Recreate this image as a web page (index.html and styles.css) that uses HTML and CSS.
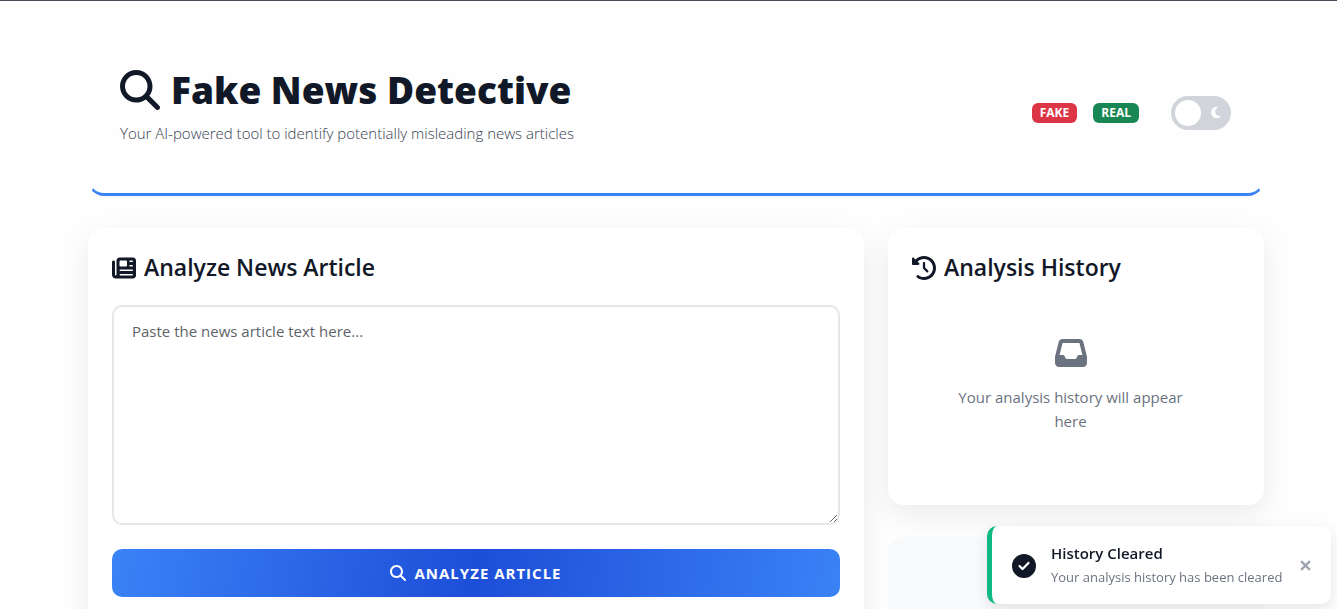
FILE: index.html
```html
<!DOCTYPE html>
<html lang="en">
<head>
<meta charset="utf-8">
<meta name="viewport" content="width=device-width, initial-scale=1">
<title>Fake News Detective</title>
<link rel="stylesheet" href="styles.css">
</head>
<body>
<svg class="sprite" aria-hidden="true">
  <symbol id="search" viewBox="0 0 512 512"><path d="M416 208c0 45.900-14.900 88.300-40 122.700L502.600 457.400c12.500 12.500 12.500 32.800 0 45.300s-32.800 12.500-45.300 0L330.700 376c-34.400 25.200-76.800 40-122.700 40C93.100 416 0 322.900 0 208S93.100 0 208 0S416 93.100 416 208zM208 352a144 144 0 1 0 0-288 144 144 0 1 0 0 288z"/></symbol>
  <symbol id="news" viewBox="0 0 512 512"><path d="M96 96c0-35.300 28.700-64 64-64H448c35.300 0 64 28.700 64 64V416c0 35.300-28.700 64-64 64H80c-44.200 0-80-35.800-80-80V128c0-17.700 14.300-32 32-32s32 14.300 32 32V400c0 8.800 7.200 16 16 16s16-7.200 16-16V96zm64 24v80c0 13.300 10.700 24 24 24H296c13.300 0 24-10.700 24-24V120c0-13.300-10.700-24-24-24H184c-13.300 0-24 10.700-24 24zm208-8c0 8.800 7.200 16 16 16h48c8.800 0 16-7.200 16-16s-7.200-16-16-16H384c-8.800 0-16 7.200-16 16zm0 96c0 8.800 7.200 16 16 16h48c8.800 0 16-7.200 16-16s-7.200-16-16-16H384c-8.800 0-16 7.200-16 16zM160 304c0 8.800 7.200 16 16 16H432c8.800 0 16-7.200 16-16s-7.200-16-16-16H176c-8.800 0-16 7.200-16 16zm0 96c0 8.800 7.200 16 16 16H432c8.800 0 16-7.200 16-16s-7.200-16-16-16H176c-8.800 0-16 7.200-16 16z"/></symbol>
  <symbol id="history" viewBox="0 0 512 512"><path d="M75 75L41 41C25.900 25.900 0 36.600 0 57.900V168c0 13.300 10.700 24 24 24H134.100c21.400 0 32.100-25.900 17-41l-30.800-30.800C155 85.500 203 64 256 64c106 0 192 86 192 192s-86 192-192 192c-40.800 0-78.600-12.700-109.700-34.400c-14.500-10.100-34.400-6.600-44.600 7.900s-6.600 34.400 7.900 44.600C151.200 495 201.700 512 256 512c141.400 0 256-114.600 256-256S397.400 0 256 0C185.300 0 121.300 28.700 75 75zm181 53c-13.300 0-24 10.700-24 24V256c0 6.400 2.500 12.500 7 17l72 72c9.400 9.400 24.600 9.400 33.900 0s9.400-24.600 0-33.900l-65-65V152c0-13.300-10.700-24-24-24z"/></symbol>
  <symbol id="inbox" viewBox="0 0 512 512"><path d="M121 32C91.600 32 66 52 58.900 80.500L1.900 308.400C.6 313.500 0 318.700 0 323.900V416c0 35.300 28.700 64 64 64H448c35.300 0 64-28.700 64-64V323.900c0-5.200-.6-10.400-1.900-15.500l-57-227.900C446 52 420.400 32 391 32H121zm0 64H391l48 192H387.800c-12.100 0-23.200 6.800-28.600 17.700l-14.300 28.600c-5.400 10.800-16.500 17.700-28.600 17.700H195.800c-12.100 0-23.200-6.800-28.600-17.700l-14.300-28.600c-5.400-10.800-16.500-17.700-28.600-17.700H73L121 96z"/></symbol>
  <symbol id="check" viewBox="0 0 512 512"><path d="M256 512A256 256 0 1 0 256 0a256 256 0 1 0 0 512zM369 209L241 337c-9.400 9.400-24.600 9.400-33.900 0l-64-64c-9.400-9.400-9.400-24.600 0-33.900s24.600-9.400 33.900 0l47 47L335 175c9.400-9.400 24.600-9.400 33.900 0s9.400 24.600 0 33.900z"/></symbol>
  <symbol id="moon" viewBox="0 0 384 512"><path d="M223.500 32C100 32 0 132.300 0 256S100 480 223.500 480c60.600 0 115.500-24.200 155.800-63.400c5-4.900 6.300-12.500 3.100-18.700s-10.100-9.700-17-8.500c-9.800 1.700-19.800 2.600-30.100 2.600c-96.900 0-175.500-78.800-175.500-176c0-65.800 36-123.100 89.300-153.300c6.100-3.500 9.200-10.500 7.700-17.300s-7.300-11.900-14.300-12.500c-6.300-.5-12.600-.8-19-.8z"/></symbol>
</svg>

<div class="container">
  <header class="header">
    <div>
      <h1 class="title"><svg class="title-icon" aria-hidden="true"><use href="#search"/></svg>Fake News Detective</h1>
      <p class="tagline">Your AI-powered tool to identify potentially misleading news articles</p>
    </div>
    <div class="tools">
      <span class="badge badge-fake">FAKE</span>
      <span class="badge badge-real">REAL</span>
      <label class="switch">
        <input class="switch-input" type="checkbox" role="switch" aria-label="Dark mode">
        <svg class="switch-moon" aria-hidden="true"><use href="#moon"/></svg>
      </label>
    </div>
  </header>

  <main class="grid">
    <section class="card">
      <h2 class="card-title"><svg class="card-icon" aria-hidden="true"><use href="#news"/></svg>Analyze News Article</h2>
      <textarea class="article" aria-label="News article text" placeholder="Paste the news article text here..."></textarea>
      <button class="analyze" type="button"><svg class="analyze-icon" aria-hidden="true"><use href="#search"/></svg>ANALYZE ARTICLE</button>
    </section>
    <div class="side">
      <section class="card history">
        <h2 class="card-title"><svg class="card-icon" aria-hidden="true"><use href="#history"/></svg>Analysis History</h2>
        <div class="empty">
          <svg class="empty-icon" aria-hidden="true"><use href="#inbox"/></svg>
          <p class="empty-text">Your analysis history will appear here</p>
        </div>
      </section>
      <section class="panel"></section>
    </div>
  </main>
</div>

<div class="toast" role="status">
  <svg class="toast-icon" aria-hidden="true"><use href="#check"/></svg>
  <div class="toast-body">
    <p class="toast-title">History Cleared</p>
    <p class="toast-text">Your analysis history has been cleared</p>
  </div>
  <button class="toast-close" type="button" aria-label="Close"><svg class="close-icon" viewBox="0 0 10 10" aria-hidden="true"><path d="M1 1L9 9M9 1L1 9"/></svg></button>
</div>
</body>
</html>
```
FILE: styles.css
```css
* { box-sizing: border-box; }
html { scrollbar-width: none; }
body {
  margin: 0;
  padding-left: 15px;
  border-top: 1px solid #4b4b57;
  background: #fefefe;
  color: #111827;
  font: 15px/24px "Segoe UI", "Open Sans", "Noto Sans", sans-serif;
}
h1, h2, p { margin: 0; }
.sprite { display: none; }

.container { max-width: 1176px; margin: 0 auto; padding-top: 32px; }
.header {
  display: flex;
  justify-content: space-between;
  align-items: center;
  padding: 33px 31px 34px 30px;
  border: 2px solid transparent;
  border-top: 0;
  border-bottom: 3px solid #3b82f6;
  border-radius: 16px;
  margin-bottom: 32px;
}
.title {
  display: flex;
  align-items: center;
  gap: 11px;
  font-size: 37px;
  line-height: 48px;
  font-weight: 800;
}
.title-icon { width: 40px; height: 40px; fill: currentColor; }
.tagline { margin: 7px 0 14px; font-weight: 300; color: #374151; }
.tools { display: flex; align-items: center; gap: 16px; }
.badge {
  padding: 4px 8px;
  border-radius: 6px;
  color: #fff;
  font-size: 12px;
  line-height: 12px;
  font-weight: 700;
}
.badge-fake { background: #dc3545; }
.badge-real { background: #198754; }
.switch { position: relative; display: flex; margin-left: 16px; }
.switch-input {
  appearance: none;
  width: 60px;
  height: 34px;
  margin: 0;
  padding: 4px;
  border-radius: 17px;
  background: #d1d5db;
}
.switch-input::before {
  content: "";
  display: block;
  width: 26px;
  height: 26px;
  border-radius: 50%;
  background: #fff;
}
.switch-input:checked::before { margin-left: auto; }
.switch-moon { position: absolute; right: 10px; top: 10px; width: 10px; height: 13px; fill: #fff; }

.grid { display: grid; grid-template-columns: 776fr 376fr; gap: 24px; }
.card {
  padding: 24px;
  border-radius: 16px;
  background: #fff;
  box-shadow: 0 10px 30px rgba(0, 0, 0, 0.08);
}
.card-title {
  display: flex;
  align-items: center;
  gap: 8px;
  margin-bottom: 22px;
  font-size: 23px;
  line-height: 31px;
  font-weight: 600;
}
.card-icon { width: 24px; height: 24px; fill: currentColor; }
.article {
  display: block;
  width: 100%;
  height: 220px;
  padding: 12px 18px;
  border: 2px solid #e5e7eb;
  border-radius: 10px;
  background: #fff;
  color: inherit;
  font: inherit;
  resize: vertical;
}
.article::placeholder { color: #5f6368; }
.analyze {
  display: flex;
  align-items: center;
  justify-content: center;
  gap: 8px;
  width: 100%;
  height: 48px;
  margin: 24px 0;
  border: 0;
  border-radius: 10px;
  background: linear-gradient(100deg, #3b82f6, #1d4ed8 50%, #3b82f6);
  color: #fff;
  font: inherit;
  font-weight: 700;
  letter-spacing: 1px;
}
.analyze-icon { width: 16px; height: 16px; fill: currentColor; }
.side { display: flex; flex-direction: column; gap: 32px; }
.empty { padding: 32px 54px 48px 43px; text-align: center; }
.empty-icon { display: block; width: 32px; height: 32px; margin: 0 auto 16px; fill: #6b7280; }
.empty-text { color: #6b7280; }
.panel { flex: 1; border-radius: 16px; background: #f8fafc; box-shadow: 0 0 6px rgba(0, 0, 0, 0.01); }

.toast {
  position: fixed;
  right: 6px;
  bottom: 5px;
  display: flex;
  align-items: center;
  min-width: 344px;
  padding: 15px 20px 14px;
  border-left: 5px solid #10b981;
  border-radius: 10px;
  background: #fff;
  box-shadow: 0 5px 15px rgba(0, 0, 0, 0.1);
}
.toast-icon { width: 24px; height: 24px; margin-right: 15px; fill: #111827; }
.toast-body { flex: 1; }
.toast-title { font-size: 15px; font-weight: 600; }
.toast-text { color: #6b7280; font-size: 13px; line-height: 25px; }
.toast-close { display: flex; margin-left: 10px; padding: 0; border: 0; background: none; }
.close-icon { width: 11px; height: 11px; stroke: #9ca3af; stroke-width: 2; }
```
